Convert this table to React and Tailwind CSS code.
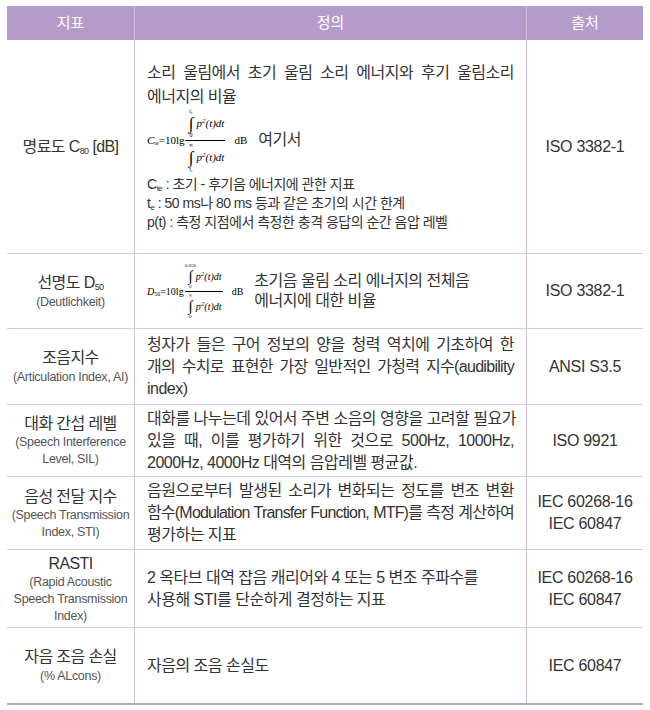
import React from "react";

const SANS = "font-['Liberation_Sans','Noto_Sans_CJK_KR',sans-serif]";
const SERIF = "font-['Liberation_Serif','DejaVu_Serif',serif]";

function Integral({ top, bottom, big }) {
  const lim = big ? "h-[7px] text-[6px] leading-[7px]" : "h-[6px] text-[5px] leading-[6px]";
  return (
    <span className="inline-flex items-center">
      <span className="inline-flex w-[9px] flex-col items-center">
        <span className={lim}>{top}</span>
        <span className={big ? "h-[17px] text-[17px] leading-[17px]" : "h-[15px] text-[15px] leading-[15px]"}>∫</span>
        <span className={lim}>{bottom}</span>
      </span>
      <span className={"ml-[1px] italic " + (big ? "text-[11px]" : "text-[10px]")}>
        p<sup className="text-[7px]">2</sup>(t)dt
      </span>
    </span>
  );
}

function Te() {
  return (
    <span>
      t<sub className="text-[4px]">e</sub>
    </span>
  );
}

function Formula({ lhs, sub, top1, bot1, top2, bot2, big }) {
  return (
    <span className={"inline-flex items-center text-black " + SERIF}>
      <span className={big ? "text-[11px]" : "text-[10px]"}>
        <span className="italic">{lhs}</span>
        <sub className="text-[6px]">{sub}</sub>=10lg
      </span>
      <span className="ml-[1px] inline-flex flex-col items-center">
        <Integral top={top1} bottom={bot1} big={big} />
        <span className={"my-[1px] h-px bg-black " + (big ? "w-[40px]" : "w-[38px]")} />
        <Integral top={top2} bottom={bot2} big={big} />
      </span>
      <span className={"ml-[9px] " + (big ? "text-[11px]" : "text-[10px]")}>dB</span>
    </span>
  );
}

function Row({ h, c1, c2, c3, last }) {
  return (
    <div
      className={
        "grid grid-cols-[127px_393px_116px] " +
        (last ? "border-b-2 border-[#b9a2cc]" : "border-b border-[#d9cce2]")
      }
      style={{ height: h }}
    >
      <div className="flex flex-col items-center justify-center text-center">{c1}</div>
      <div className="flex flex-col justify-center border-x border-[#cdbdd9] px-3">{c2}</div>
      <div className="flex flex-col items-center justify-center text-center text-[16px] leading-[22px] tracking-[-0.3px] text-[#333]">
        {c3}
      </div>
    </div>
  );
}

function Label({ main, sub }) {
  return (
    <>
      <div className="text-[16px] leading-[21px] tracking-[-0.6px] text-[#333]">{main}</div>
      {sub && <div className="text-[12.5px] leading-[18px] tracking-[-0.3px] text-[#555]">{sub}</div>}
    </>
  );
}

const J = "whitespace-nowrap text-justify [text-align-last:justify]";
const L = "whitespace-nowrap";
const SUBTXT = "text-[12.5px] leading-[17px] tracking-[-0.3px] text-[#555]";
const DEF = "text-[16px] leading-[22px] tracking-[-0.5px]";

export default function App() {
  return (
    <div className={"h-[710px] w-[650px] bg-white pt-[6px] pl-[7px] text-[#333] " + SANS}>
      <div className="w-[636px]">
        <div className="grid h-[34px] grid-cols-[127px_393px_116px] bg-[#b59bc9] text-[15px] text-white">
          <div className="flex items-center justify-center">지표</div>
          <div className="flex items-center justify-center border-x border-[#d3c3de]">정의</div>
          <div className="flex items-center justify-center">출처</div>
        </div>

        <Row
          h={214}
          c1={
            <Label
              main={
                <span>
                  명료도 C<sub className="text-[9px]">80</sub> [dB]
                </span>
              }
            />
          }
          c2={
            <div className="text-[16px] tracking-[-0.5px]">
              <div className={"leading-[24px] " + J}>소리 울림에서 초기 울림 소리 에너지와 후기 울림소리</div>
              <div className="leading-[24px]">에너지의 비율</div>
              <div className="flex h-[62px] items-center tracking-normal">
                <Formula lhs="C" sub="te" top1={<Te />} bot1="0" top2="∞" bot2={<Te />} big />
                <span className="ml-[11px] text-[16px] tracking-[-0.5px]">여기서</span>
              </div>
              <div className="mt-[4px] text-[14px] leading-[19px] tracking-[-0.5px]">
                <div>
                  C<sub className="text-[8px]">te</sub> : 초기 - 후기음 에너지에 관한 지표
                </div>
                <div>
                  t<sub className="text-[8px]">e</sub> : 50 ms나 80 ms 등과 같은 초기의 시간 한계
                </div>
                <div>p(t) : 측정 지점에서 측정한 충격 응답의 순간 음압 레벨</div>
              </div>
            </div>
          }
          c3={<div>ISO 3382-1</div>}
        />

        <Row
          h={75}
          c1={
            <Label
              main={
                <span>
                  선명도 D<sub className="text-[9px]">50</sub>
                </span>
              }
              sub="(Deutlichkeit)"
            />
          }
          c2={
            <div className="flex items-center">
              <Formula lhs="D" sub="50" top1="0.050" bot1="0" top2="∞" bot2="0" />
              <div className="ml-[11px] text-[16px] leading-[20px] tracking-[-0.5px]">
                <div>초기음 울림 소리 에너지의 전체음</div>
                <div>에너지에 대한 비율</div>
              </div>
            </div>
          }
          c3={<div>ISO 3382-1</div>}
        />

        <Row
          h={76}
          c1={<Label main="조음지수" sub="(Articulation Index, AI)" />}
          c2={
            <div className={DEF}>
              <div className={J}>청자가 들은 구어 정보의 양을 청력 역치에 기초하여 한</div>
              <div className={J + " tracking-[-0.7px]"}>개의 수치로 표현한 가장 일반적인 가청력 지수(audibility</div>
              <div className={L}>index)</div>
            </div>
          }
          c3={<div>ANSI S3.5</div>}
        />

        <Row
          h={72}
          c1={
            <>
              <Label main="대화 간섭 레벨" />
              <div className={SUBTXT}>
                (Speech Interference
                <br />
                Level, SIL)
              </div>
            </>
          }
          c2={
            <div className={DEF}>
              <div className={J}>대화를 나누는데 있어서 주변 소음의 영향을 고려할 필요가</div>
              <div className={J}>있을 때, 이를 평가하기 위한 것으로 500Hz, 1000Hz,</div>
              <div className={L}>2000Hz, 4000Hz 대역의 음압레벨 평균값.</div>
            </div>
          }
          c3={<div>ISO 9921</div>}
        />

        <Row
          h={73}
          c1={
            <>
              <Label main="음성 전달 지수" />
              <div className={SUBTXT}>
                (Speech Transmission
                <br />
                Index, STI)
              </div>
            </>
          }
          c2={
            <div className={DEF}>
              <div className={J}>음원으로부터 발생된 소리가 변화되는 정도를 변조 변환</div>
              <div className={J + " tracking-[-0.8px]"}>함수(Modulation Transfer Function, MTF)를 측정 계산하여</div>
              <div className={L}>평가하는 지표</div>
            </div>
          }
          c3={
            <>
              <div>IEC 60268-16</div>
              <div>IEC 60847</div>
            </>
          }
        />

        <Row
          h={78}
          c1={
            <>
              <Label main="RASTI" />
              <div className={SUBTXT}>
                (Rapid Acoustic
                <br />
                Speech Transmission
                <br />
                Index)
              </div>
            </>
          }
          c2={
            <div className={DEF}>
              <div className={L}>2 옥타브 대역 잡음 캐리어와 4 또는 5 변조 주파수를</div>
              <div className={L}>사용해 STI를 단순하게 결정하는 지표</div>
            </div>
          }
          c3={
            <>
              <div>IEC 60268-16</div>
              <div>IEC 60847</div>
            </>
          }
        />

        <Row
          h={77}
          last
          c1={<Label main="자음 조음 손실" sub="(% ALcons)" />}
          c2={<div className={DEF}>자음의 조음 손실도</div>}
          c3={<div>IEC 60847</div>}
        />
      </div>
    </div>
  );
}
